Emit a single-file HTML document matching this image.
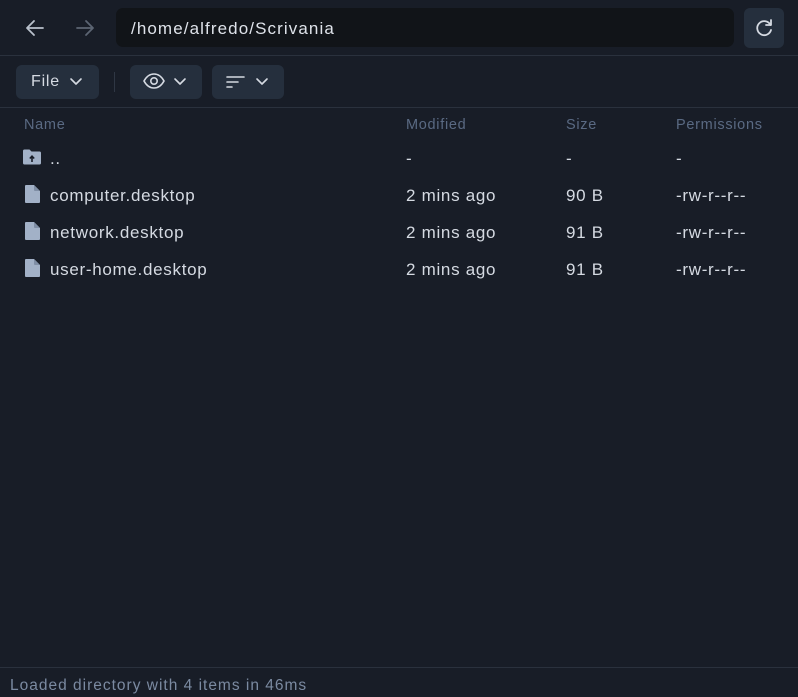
<!DOCTYPE html>
<html><head><style>
*{margin:0;padding:0;box-sizing:border-box}
body{width:798px;height:697px;background:#181d27;font-family:"Liberation Sans",sans-serif;color:#d5dae2;position:relative;overflow:hidden}
.abs{position:absolute}
.top{left:0;top:0;width:798px;height:56px;border-bottom:1px solid #2a313d}
.addr{left:116px;top:8px;width:618px;height:39px;background:#111418;border-radius:7px;font-size:17px;letter-spacing:1.1px;line-height:41px;padding-left:15px;color:#dfe3ea}
.btn{background:#252f3d;border-radius:6px}
.tb{top:57px;left:0;width:798px;height:51px;border-bottom:1px solid #2a313d}
.hd{top:117px;font-size:14.5px;letter-spacing:0.7px;color:#5a6a83}
.row{font-size:17px;letter-spacing:0.7px;color:#d5dae2}
.st{top:667px;left:0;width:798px;height:30px;border-top:1px solid #2a313d;font-size:15.5px;letter-spacing:1px;color:#7b8aa1;padding:9px 10px}
</style></head><body>
<div class="abs top"></div>
<svg class="abs" style="left:24px;top:17px" width="22" height="22" viewBox="0 0 22 22" fill="none" stroke="#b9c1cc" stroke-width="1.8" stroke-linecap="round" stroke-linejoin="round"><path d="M19 11H4M10 4L3 11l7 7"/></svg>
<svg class="abs" style="left:74px;top:17px" width="22" height="22" viewBox="0 0 22 22" fill="none" stroke="#5c6573" stroke-width="1.8" stroke-linecap="round" stroke-linejoin="round"><path d="M3 11h15M12 4l7 7-7 7"/></svg>
<div class="abs addr">/home/alfredo/Scrivania</div>
<div class="abs btn" style="left:744px;top:8px;width:40px;height:40px"></div>
<svg class="abs" style="left:753px;top:17px" width="22" height="22" viewBox="0 0 22 22" fill="none" stroke="#d5dae2" stroke-width="1.8" stroke-linecap="round" stroke-linejoin="round"><path d="M17.5 8A7 7 0 1 0 18 13"/><path d="M18 3v5h-5"/></svg>
<div class="abs tb"></div>
<div class="abs btn" style="left:16px;top:65px;width:83px;height:34px"></div>
<div class="abs" style="left:31px;top:73px;font-size:16px;letter-spacing:0.8px;color:#d5dae2">File</div>
<svg class="abs" style="left:69px;top:76px" width="14" height="12" viewBox="0 0 14 12" fill="none" stroke="#d5dae2" stroke-width="1.6" stroke-linecap="round" stroke-linejoin="round"><path d="M2 3l5 5 5-5"/></svg>
<div class="abs" style="left:114px;top:72px;width:1px;height:20px;background:#2f3744"></div>
<div class="abs btn" style="left:130px;top:65px;width:72px;height:34px"></div>
<svg class="abs" style="left:142px;top:72px" width="24" height="18" viewBox="0 0 24 18" fill="none" stroke="#d5dae2" stroke-width="1.6"><path d="M2 9C5 3.5 9 2 12 2s7 1.5 10 7c-3 5.5-7 7-10 7S5 14.5 2 9z"/><circle cx="12" cy="9" r="3.2"/></svg>
<svg class="abs" style="left:173px;top:76px" width="14" height="12" viewBox="0 0 14 12" fill="none" stroke="#d5dae2" stroke-width="1.6" stroke-linecap="round" stroke-linejoin="round"><path d="M2 3l5 5 5-5"/></svg>
<div class="abs btn" style="left:212px;top:65px;width:72px;height:34px"></div>
<svg class="abs" style="left:225px;top:73px" width="22" height="18" viewBox="0 0 22 18" fill="none" stroke="#d5dae2" stroke-width="1.6" stroke-linecap="round"><path d="M2 4h17M2 9h11M2 14h5"/></svg>
<svg class="abs" style="left:255px;top:76px" width="14" height="12" viewBox="0 0 14 12" fill="none" stroke="#d5dae2" stroke-width="1.6" stroke-linecap="round" stroke-linejoin="round"><path d="M2 3l5 5 5-5"/></svg>
<div class="abs hd" style="left:24px">Name</div>
<div class="abs hd" style="left:406px">Modified</div>
<div class="abs hd" style="left:566px">Size</div>
<div class="abs hd" style="left:676px">Permissions</div>

<svg class="abs" style="left:22px;top:148px" width="20" height="18" viewBox="0 0 20 18"><path d="M1 3a1.5 1.5 0 0 1 1.5-1.5h5l2 2h8a1.5 1.5 0 0 1 1.5 1.5v10a1.5 1.5 0 0 1-1.5 1.5h-15A1.5 1.5 0 0 1 1 15z" fill="#a2b1c7"/><path d="M10 14V8.5M7.8 10.5L10 8.2l2.2 2.3" stroke="#181d27" stroke-width="1.6" fill="none"/></svg>
<div class="abs row" style="left:50px;top:149px">..</div>
<div class="abs row" style="left:406px;top:149px">-</div>
<div class="abs row" style="left:566px;top:149px">-</div>
<div class="abs row" style="left:676px;top:149px">-</div>

<svg class="abs" style="left:24px;top:184px" width="17" height="20" viewBox="0 0 17 20"><path d="M2 1h8l6 6v11a1 1 0 0 1-1 1H2a1 1 0 0 1-1-1V2a1 1 0 0 1 1-1z" fill="#a2b1c7"/><path d="M10 1v5a1 1 0 0 0 1 1h5" fill="#7f8ea5"/></svg>
<div class="abs row" style="left:50px;top:186px">computer.desktop</div>
<div class="abs row" style="left:406px;top:186px">2 mins ago</div>
<div class="abs row" style="left:566px;top:186px">90 B</div>
<div class="abs row" style="left:676px;top:186px">-rw-r--r--</div>

<svg class="abs" style="left:24px;top:221px" width="17" height="20" viewBox="0 0 17 20"><path d="M2 1h8l6 6v11a1 1 0 0 1-1 1H2a1 1 0 0 1-1-1V2a1 1 0 0 1 1-1z" fill="#a2b1c7"/><path d="M10 1v5a1 1 0 0 0 1 1h5" fill="#7f8ea5"/></svg>
<div class="abs row" style="left:50px;top:223px">network.desktop</div>
<div class="abs row" style="left:406px;top:223px">2 mins ago</div>
<div class="abs row" style="left:566px;top:223px">91 B</div>
<div class="abs row" style="left:676px;top:223px">-rw-r--r--</div>

<svg class="abs" style="left:24px;top:258px" width="17" height="20" viewBox="0 0 17 20"><path d="M2 1h8l6 6v11a1 1 0 0 1-1 1H2a1 1 0 0 1-1-1V2a1 1 0 0 1 1-1z" fill="#a2b1c7"/><path d="M10 1v5a1 1 0 0 0 1 1h5" fill="#7f8ea5"/></svg>
<div class="abs row" style="left:50px;top:260px">user-home.desktop</div>
<div class="abs row" style="left:406px;top:260px">2 mins ago</div>
<div class="abs row" style="left:566px;top:260px">91 B</div>
<div class="abs row" style="left:676px;top:260px">-rw-r--r--</div>

<div class="abs st">Loaded directory with 4 items in 46ms</div>
</body></html>
